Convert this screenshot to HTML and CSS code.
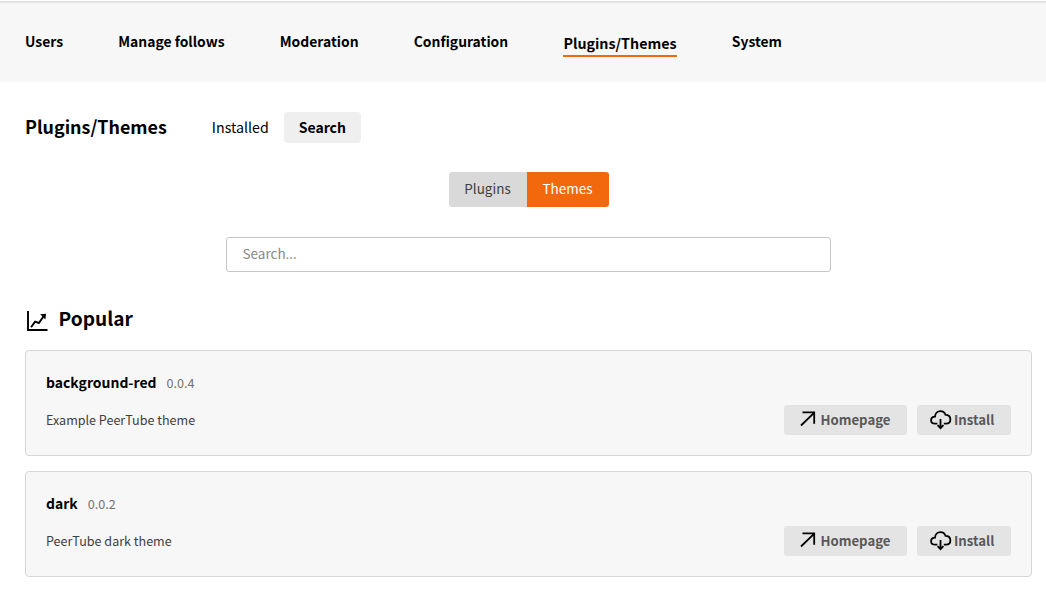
FILE: index.html
```html
<!DOCTYPE html>
<html lang="en">
<head>
<meta charset="utf-8">
<title>Plugins/Themes</title>
<link rel="stylesheet" href="styles.css">
</head>
<body>
<svg class="defs" width="0" height="0" aria-hidden="true">
  <symbol id="arrow" viewBox="0 0 16 16"><path d="M1 14.5L14.3 1.7M2.5 1.3H14.2V12.7" fill="none" stroke="#000" stroke-width="1.8"/></symbol>
  <symbol id="cloud" viewBox="0 0 22 20"><g fill="none" stroke="#000" stroke-width="1.8"><path d="M7.4 13.7H5.2C2.8 13.7 1.1 12.3 1.1 10.2C1.1 8.2 2.7 6.7 5 6.6C5.2 3.4 7.5 1.1 10.4 1.1C12.9 1.1 14.7 2.5 15.6 4.8C18.4 4.7 20.4 6.6 20.4 9.2C20.4 11.9 18.6 13.7 16 13.7H13.8"/><path d="M10.5 9V18.2M7.6 15.2L10.5 18.2L13.4 15.2"/></g></symbol>
</svg>
<nav class="sub-menu">
  <a>Users</a><a>Manage follows</a><a>Moderation</a><a>Configuration</a><a class="active">Plugins/Themes</a><a>System</a>
</nav>
<main>
  <header class="page-header">
    <h1>Plugins/Themes</h1>
    <a class="tab">Installed</a>
    <a class="tab selected">Search</a>
  </header>
  <div class="toggle"><span class="plugins">Plugins</span><span class="themes">Themes</span></div>
  <input class="search" type="text" placeholder="Search...">
  <h2>
    <svg width="21" height="21" viewBox="0 0 21 21"><g fill="none" stroke="#000"><path d="M1 0V19H20.5" stroke-width="1.9"/><path d="M4 16.3L8.1 10.6L11.8 12L17 4.8" stroke-width="1.9"/></g><path d="M13.2 3.2L19 2.8L18.4 8.6Z"/></svg>
    <span>Popular</span>
  </h2>
  <section class="card">
    <div class="title"><strong>background-red</strong><span class="version">0.0.4</span></div>
    <div class="row"><p>Example PeerTube theme</p>
      <a class="button home"><svg width="16" height="16"><use href="#arrow"/></svg><span>Homepage</span></a>
      <a class="button install"><svg width="22" height="20"><use href="#cloud"/></svg><span>Install</span></a>
    </div>
  </section>
  <section class="card">
    <div class="title"><strong>dark</strong><span class="version">0.0.2</span></div>
    <div class="row"><p>PeerTube dark theme</p>
      <a class="button home"><svg width="16" height="16"><use href="#arrow"/></svg><span>Homepage</span></a>
      <a class="button install"><svg width="22" height="20"><use href="#cloud"/></svg><span>Install</span></a>
    </div>
  </section>
</main>
</body>
</html>
```
FILE: styles.css
```css
* { box-sizing: border-box; }
body { margin: 0; height: 600px; overflow: hidden; background: #fff; color: #000; font: 13.5px/20px "Noto Sans CJK SC", "Open Sans", sans-serif; white-space: nowrap; }
.defs { display: block; height: 0; }
.sub-menu { height: 82px; border-top: 1px solid #fff; background: linear-gradient(#dcdfde 0 1px, #e7e9e8 1px 2px, #f2f3f3 2px 3px, #f7f7f7 3px); padding: 0 25px; display: flex; align-items: center; gap: 55.2px; font-size: 13.9px; font-weight: 600; }
.sub-menu a { height: 24px; line-height: 22px; }
.sub-menu .active { border-bottom: 2px solid #f2690d; height: 30px; line-height: 32px; font-size: 14.27px; }
main { padding: 30px 14px 0 25px; }
.page-header { display: flex; height: 31px; align-items: center; }
h1 { margin: 0 30px 0 0; font-size: 17.9px; line-height: 29px; height: 31px; font-weight: 700; }
.tab { padding: 0 15px; line-height: 31px; border-radius: 4px; font-size: 14.2px; }
.selected { background: #efefef; font-weight: 600; font-size: 14px; }
.toggle { display: flex; width: 160px; margin: 29px auto 0; height: 35px; line-height: 33px; border-radius: 3px; overflow: hidden; }
.plugins { width: 78px; text-align: center; background: #d9d9d9; color: #3f3f3f; }
.themes { flex: 1; text-align: center; background: #f2690d; color: #fff; }
.search { display: block; width: 605px; height: 35px; margin: 30px auto 0; border: 1px solid #c6c6c6; border-radius: 3px; padding: 0 15px 3px 15.5px; font: inherit; }
.search::placeholder { color: #888; opacity: 1; }
h2 { margin: 32px 0 0; height: 31px; display: flex; align-items: center; font-size: 19.1px; font-weight: 600; line-height: 28px; gap: 10.5px; }
h2 svg { margin: 3px 0 0 2px; }
h2 span { height: 31px; }
.card { height: 106px; margin-top: 15px; padding: 20px 20px 0; border: 1px solid #d6d6d6; border-radius: 4px; background: #f7f7f7; }
.title { height: 22px; line-height: 22px; display: flex; }
.title strong { font-weight: 600; font-size: 13.95px; }
.version { margin-left: 10px; font-size: 12.6px; line-height: 24px; color: #737373; }
.row { display: flex; margin-top: 12px; height: 30px; line-height: 30px; }
.row p { margin: 0 auto 0 0; font-size: 12.55px; color: #3f3f3f; }
.button { display: flex; height: 30px; line-height: 30px; background: #e4e4e4; border-radius: 3px; color: #585858; font-size: 13.2px; font-weight: 600; }
.home { width: 123px; padding-left: 16px; }
.home svg { margin: 6px 4.5px 0 0; }
.install { width: 94px; margin-left: 10px; padding-left: 13px; }
.install svg { margin: 5px 2px 0 0; }
```
